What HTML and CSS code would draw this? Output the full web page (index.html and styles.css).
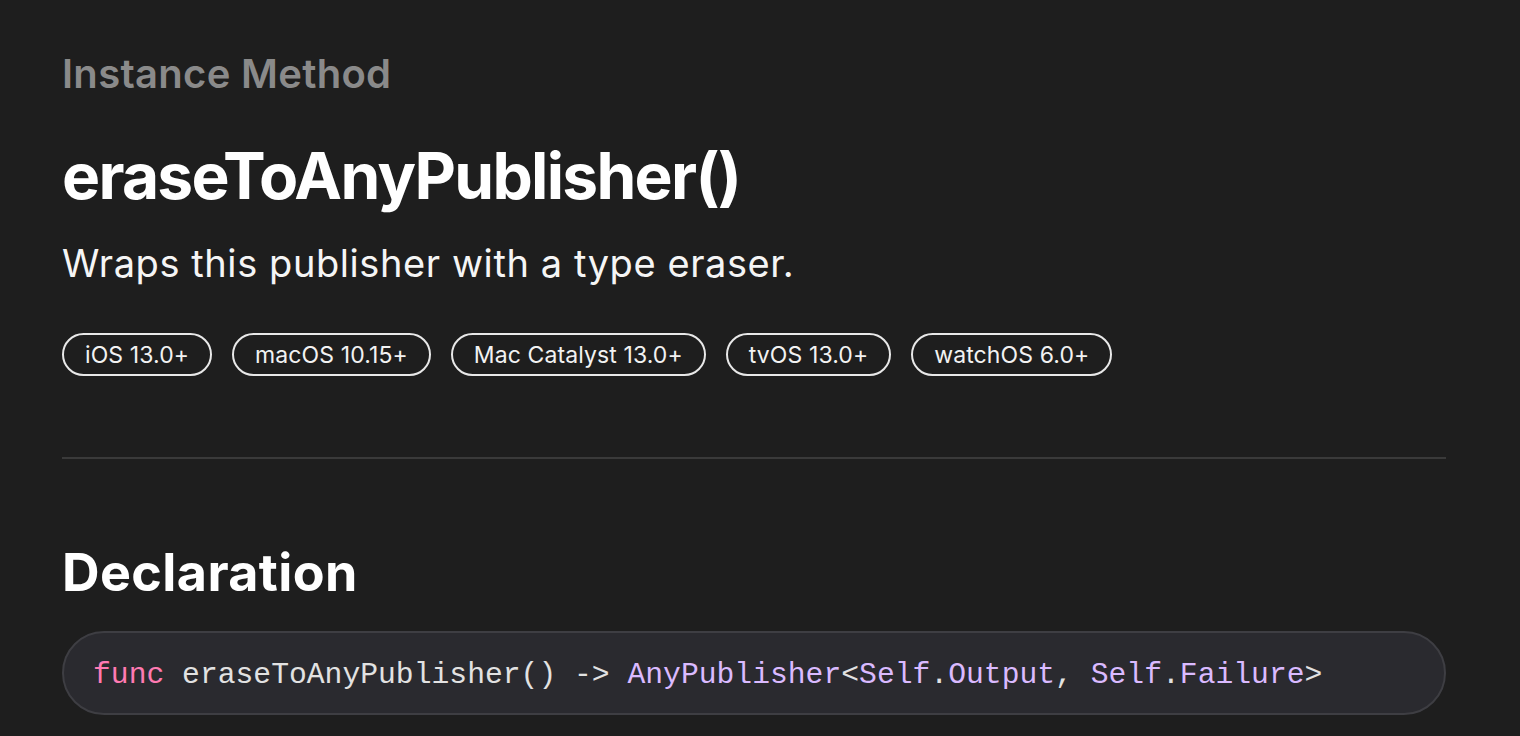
FILE: index.html
```html
<!DOCTYPE html>
<html lang="en">
<head>
<meta charset="utf-8">
<title>eraseToAnyPublisher()</title>
<link rel="stylesheet" href="styles.css">
</head>
<body>
<main class="page">
  <section class="intro">
    <div class="eyebrow">Instance Method</div>
    <h1 class="title">eraseToAnyPublisher()</h1>
    <p class="abstract">Wraps this publisher with a type eraser.</p>
    <ul class="platforms">
      <li class="pill">iOS 13.0+</li>
      <li class="pill">macOS 10.15+</li>
      <li class="pill">Mac Catalyst 13.0+</li>
      <li class="pill">tvOS 13.0+</li>
      <li class="pill">watchOS 6.0+</li>
    </ul>
  </section>
  <hr class="divider">
  <section class="declaration">
    <h2 class="section-title">Declaration</h2>
    <pre class="code"><span class="kw">func</span> eraseToAnyPublisher() -&gt; <span class="type">AnyPublisher</span>&lt;<span class="type">Self</span>.<span class="type">Output</span>, <span class="type">Self</span>.<span class="type">Failure</span>&gt;</pre>
  </section>
</main>
</body>
</html>
```

FILE: styles.css
```css
html, body {
  margin: 0;
  padding: 0;
  background: #1e1e1e;
  color: #ffffff;
  font-family: Inter, "Noto Sans", sans-serif;
}

.page {
  padding: 50px 74px 0 62px;
  display: flex;
  flex-direction: column;
}

.intro {
  display: flex;
  flex-direction: column;
}

.eyebrow {
  font-size: 40px;
  line-height: 48px;
  font-weight: 600;
  color: #8a8a8a;
  letter-spacing: 0.3px;
}

.title {
  margin: 40px 0 0;
  font-size: 64px;
  line-height: 76px;
  font-weight: 700;
  letter-spacing: -1.7px;
}

.abstract {
  margin: 26px 0 0;
  font-size: 38px;
  line-height: 46px;
  font-weight: 400;
  color: #f5f5f5;
  letter-spacing: 0.58px;
}

.platforms {
  list-style: none;
  margin: 47px 0 0;
  padding: 0;
  display: flex;
  gap: 20px;
}

.pill {
  height: 43px;
  box-sizing: border-box;
  border: 2px solid #e8e8e8;
  border-radius: 22px;
  padding: 0 21px;
  display: flex;
  align-items: center;
  font-size: 23px;
  letter-spacing: 0.1px;
  color: #f2f2f2;
}

.divider {
  margin: 81px 0 0;
  border: 0;
  height: 2px;
  background: #3a3a3a;
}

.declaration {
  display: flex;
  flex-direction: column;
}

.section-title {
  margin: 83px 0 0;
  font-size: 52px;
  line-height: 62px;
  font-weight: 700;
  letter-spacing: 0.4px;
}

.code {
  margin: 27px 0 0;
  box-sizing: border-box;
  height: 84px;
  background: #2a2a2f;
  border: 2px solid #3e3e43;
  border-radius: 42px;
  padding: 22px 29px 18px;
  font-family: "Liberation Mono", "DejaVu Sans Mono", monospace;
  font-size: 29.7px;
  line-height: 40px;
  color: #e2e2e2;
  white-space: pre;
}

.kw {
  color: #ff7ab2;
}

.type {
  color: #dabaff;
}
```
